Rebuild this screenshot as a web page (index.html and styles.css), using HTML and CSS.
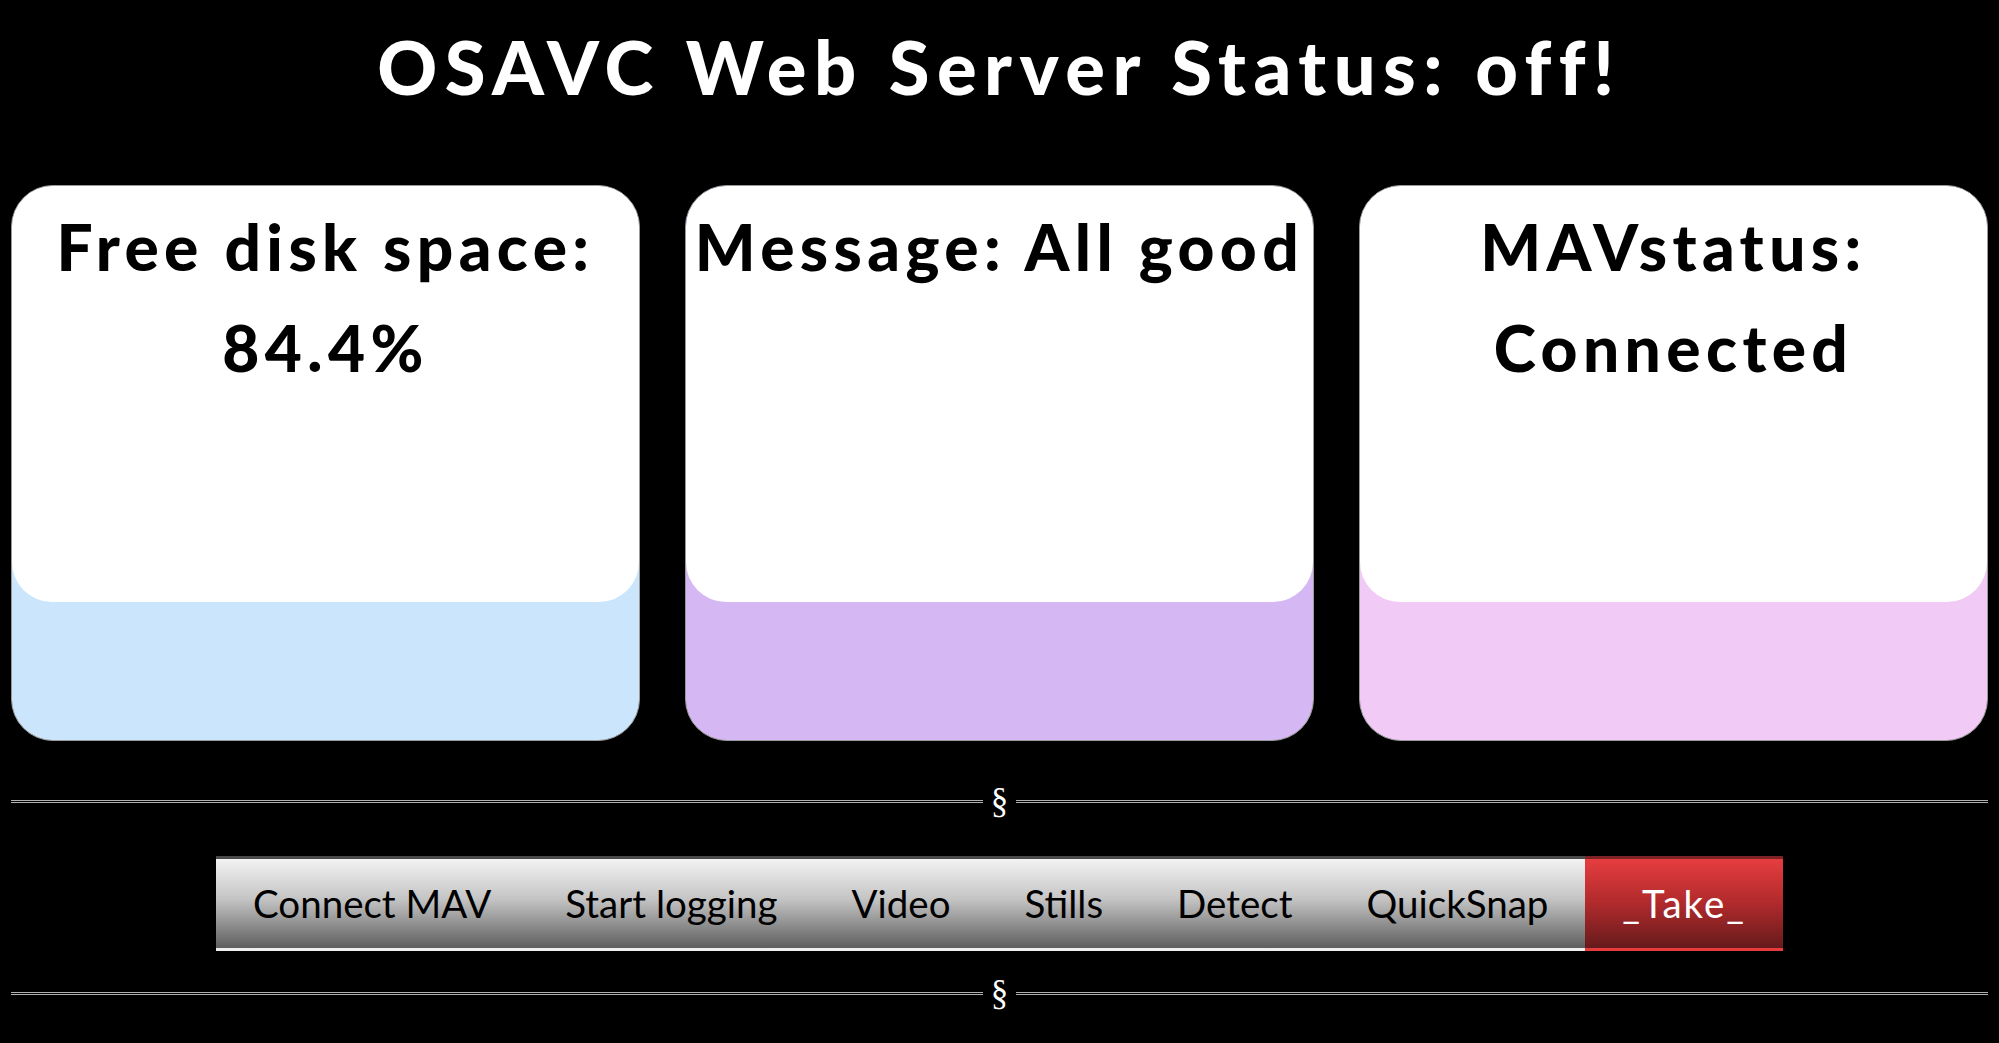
FILE: index.html
```html
<!DOCTYPE html>
<html>
<head>
<meta charset="utf-8">
<title>OSAVC Web Server</title>
<link rel="stylesheet" href="styles.css">
</head>
<body>
<h1 class="title">OSAVC Web Server Status: off!</h1>
<div class="cards">
  <div class="card card-blue">
    <div class="card-face">
      <div class="card-text">Free disk space:<br>84.4%</div>
    </div>
  </div>
  <div class="card card-purple">
    <div class="card-face">
      <div class="card-text">Message: All good</div>
    </div>
  </div>
  <div class="card card-pink">
    <div class="card-face">
      <div class="card-text">MAVstatus:<br>Connected</div>
    </div>
  </div>
</div>
<div class="sep sep-top"><span class="line"></span><span class="mark">§</span><span class="line"></span></div>
<div class="navwrap">
  <nav class="nav">
    <a class="nav-item">Connect MAV</a>
    <a class="nav-item">Start logging</a>
    <a class="nav-item">Video</a>
    <a class="nav-item">Stills</a>
    <a class="nav-item">Detect</a>
    <a class="nav-item">QuickSnap</a>
    <a class="nav-item nav-take">_Take_</a>
  </nav>
</div>
<div class="sep sep-bottom"><span class="line"></span><span class="mark">§</span><span class="line"></span></div>
</body>
</html>
```
FILE: styles.css
```css
html, body {
  margin: 0;
  padding: 0;
  background: #000;
}
body {
  font-family: Lato, "Liberation Sans", sans-serif;
  color: #000;
}
.title {
  margin: 22px 0 0 0;
  font-size: 74px;
  line-height: 89px;
  font-weight: 900;
  letter-spacing: 7.5px;
  color: #fff;
  text-align: center;
}
.cards {
  display: grid;
  grid-template-columns: 1fr 1fr 1fr;
  column-gap: 45px;
  padding: 0 11px;
  margin-top: 74px;
}
.card {
  height: 556px;
  border-radius: 42px;
  box-sizing: border-box;
  border: 1px solid #9a9a9a;
  overflow: hidden;
}
.card-blue { background: #cbe5fd; }
.card-purple { background: #d5b8f3; }
.card-pink { background: #f1cbf5; }
.card-face {
  height: 416px;
  background: #fff;
  border-radius: 40px;
  padding-top: 10px;
  box-sizing: border-box;
}
.card-text {
  font-size: 64px;
  line-height: 101px;
  font-weight: 900;
  letter-spacing: 5.4px;
  text-align: center;
  white-space: nowrap;
}
.sep {
  display: flex;
  align-items: center;
  padding: 0 11px;
  height: 34px;
}
.sep-top { margin-top: 43px; }
.sep-bottom { margin-top: 25px; }
.line {
  flex: 1;
  height: 1px;
  border-top: 1px solid #b0b0b0;
  border-bottom: 1px solid #b0b0b0;
}
.mark {
  font-family: "Liberation Serif", serif;
  font-size: 35px;
  color: #fff;
  padding: 0 8px;
  line-height: 34px;
}
.navwrap {
  display: flex;
  justify-content: center;
  margin-top: 38px;
}
.nav {
  display: flex;
  background: linear-gradient(#f3f3f3, #c4c4c4 45%, #5e5e5e);
  border-top: 3px solid #4a4a4a;
  border-bottom: 3px solid #efefef;
}
.nav-item {
  display: block;
  padding: 0 37px;
  font-size: 38.5px;
  line-height: 89px;
  color: #000;
}
.nav-take {
  color: #fff;
  letter-spacing: 2px;
  background: linear-gradient(#e63d3f, #b02a2c 50%, #661a1c);
  margin: -3px 0;
  border-top: 3px solid #7c2224;
  border-bottom: 3px solid #e83b3d;
}
```
